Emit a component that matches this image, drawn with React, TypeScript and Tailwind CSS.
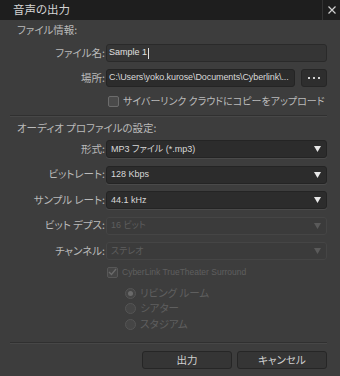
import { ReactNode } from "react";

const jp = "font-['Segoe_UI','Noto_Sans_CJK_JP',sans-serif] [font-feature-settings:'palt']";
const val = "font-['Liberation_Sans','Noto_Sans_CJK_JP',sans-serif] text-[9px]";

function Arrow({ dim }: { dim?: boolean }) {
  return (
    <svg width="7" height="6" viewBox="0 0 7 6" className="shrink-0">
      <polygon points="0,0 7,0 3.5,6" fill={dim ? "#5a5a5a" : "#e8e8e8"} />
    </svg>
  );
}

function Row({ label, children }: { label: string; children: ReactNode }) {
  return (
    <div className="flex items-center h-[18px]">
      <div className="w-[96px] shrink-0 pr-[1px] text-right text-[10.5px] text-[#bababa] leading-none">{label}</div>
      <div className="flex-1 min-w-0 flex h-full">{children}</div>
    </div>
  );
}

function Select({ value, disabled }: { value: string; disabled?: boolean }) {
  return (
    <div
      className={`flex-1 flex items-center justify-between pl-[4px] pr-[5px] rounded-[3px] border ${
        disabled ? "bg-[#3b3b3b] border-[#454545] text-[#5e5e5e]" : "bg-[#2c2c2c] border-[#242424] text-[#d8d8d8] shadow-[0_1px_0_#4a4a4a]"
      }`}
    >
      <span className={`${val} leading-none`}>{value}</span>
      <Arrow dim={disabled} />
    </div>
  );
}

function Radio({ label, checked }: { label: string; checked?: boolean }) {
  return (
    <div className="flex items-center gap-[4px] h-[12px]">
      <div className="w-[11px] h-[11px] shrink-0 rounded-full border border-[#555] bg-[#454545] flex items-center justify-center">
        {checked && <div className="w-[5px] h-[5px] rounded-full bg-[#6a6a6a]" />}
      </div>
      <span className="text-[10.5px] text-[#5f5f5f] leading-none">{label}</span>
    </div>
  );
}

function Divider() {
  return <div className="border-t border-[#303030] border-b border-b-[#474747]" />;
}

export default function App() {
  return (
    <div className={`w-[340px] h-[376px] bg-[#3d3d3d] flex flex-col ${jp}`}>
      {/* Title bar */}
      <div className="h-[20px] bg-[#1e1e1e] flex items-center shrink-0">
        <span className="pl-[13px] text-[11.5px] text-[#d4d4d4] leading-none flex-1">音声の出力</span>
        <div className="h-full w-[18px] border-l border-[#333] flex items-center justify-center">
          <svg width="8" height="8" viewBox="0 0 8 8">
            <path d="M0.5 0.5 L7.5 7.5 M7.5 0.5 L0.5 7.5" stroke="#cfcfcf" strokeWidth="1.2" />
          </svg>
        </div>
      </div>

      <div className="flex flex-col pl-[10px] pr-[13px]">
        <div className="pl-[7px] mt-[4px] h-[13px] text-[10.5px] text-[#bababa] leading-none flex items-center">ファイル情報:</div>

        <div className="mt-[7px] flex flex-col gap-[7px]">
          <Row label="ファイル名:">
            <div className={`flex-1 flex items-center pl-[2px] bg-[#353535] border border-[#2a2a2a] rounded-[3px] ${val} text-[#e0e0e0]`}>
              Sample 1<span className="w-px h-[11px] bg-[#e0e0e0] ml-px" />
            </div>
          </Row>
          <Row label="場所:">
            <div className={`flex-1 min-w-0 flex items-center pl-[2px] bg-[#2c2c2c] border border-[#242424] rounded-[3px] ${val} tracking-[-0.1px] text-[#d8d8d8] whitespace-nowrap overflow-hidden`}>
              C:\Users\yoko.kurose\Documents\Cyberlink\...
            </div>
            <div className="ml-[6px] w-[26px] shrink-0 flex items-center justify-center gap-[3px] bg-[#2e2e2e] border border-[#262626] rounded-[3px]">
              <span className="w-[2px] h-[2px] bg-[#d0d0d0]" />
              <span className="w-[2px] h-[2px] bg-[#d0d0d0]" />
              <span className="w-[2px] h-[2px] bg-[#d0d0d0]" />
            </div>
          </Row>
        </div>

        <div className="mt-[8px] ml-[98px] flex items-center gap-[4px] h-[12px]">
          <div className="w-[11px] h-[11px] shrink-0 rounded-[2px] border border-[#6c6c6c] bg-[#4a4a4a]" />
          <span className="text-[10px] text-[#bababa] leading-none whitespace-nowrap">サイバーリンク クラウドにコピーをアップロード</span>
        </div>

        <div className="mt-[8px]">
          <Divider />
        </div>

        <div className="pl-[7px] mt-[5px] h-[13px] text-[10.5px] text-[#bababa] leading-none flex items-center">オーディオ プロファイルの設定:</div>

        <div className="mt-[5px] flex flex-col gap-[7.5px]">
          <Row label="形式:"><Select value="MP3 ファイル (*.mp3)" /></Row>
          <Row label="ビットレート:"><Select value="128 Kbps" /></Row>
          <Row label="サンプル レート:"><Select value="44.1 kHz" /></Row>
          <Row label="ビット デプス:"><Select value="16 ビット" disabled /></Row>
          <Row label="チャンネル:"><Select value="ステレオ" disabled /></Row>
        </div>

        <div className="mt-[6px] ml-[97px] flex items-center gap-[4px] h-[12px]">
          <div className="w-[11px] h-[11px] shrink-0 rounded-[2px] border border-[#575757] bg-[#454545] flex items-center justify-center">
            <svg width="9" height="8" viewBox="0 0 9 8">
              <path d="M1 4 L3.5 6.5 L8 1" stroke="#6a6a6a" strokeWidth="1.4" fill="none" />
            </svg>
          </div>
          <span className="font-['Liberation_Sans',sans-serif] text-[8.5px] text-[#5f5f5f] leading-none whitespace-nowrap">CyberLink TrueTheater Surround</span>
        </div>

        <div className="mt-[9px] ml-[115px] flex flex-col gap-[3.5px]">
          <Radio label="リビング ルーム" checked />
          <Radio label="シアター" />
          <Radio label="スタジアム" />
        </div>

        <div className="mt-[12px]">
          <Divider />
        </div>

        <div className="mt-[7px] flex justify-end gap-[5px]">
          <button className="w-[90px] h-[18px] bg-[#353535] border border-[#262626] rounded-[3px] text-[10.5px] text-[#d0d0d0] leading-none">出力</button>
          <button className="w-[90px] h-[18px] bg-[#353535] border border-[#262626] rounded-[3px] text-[10.5px] text-[#d0d0d0] leading-none">キャンセル</button>
        </div>
      </div>
    </div>
  );
}
